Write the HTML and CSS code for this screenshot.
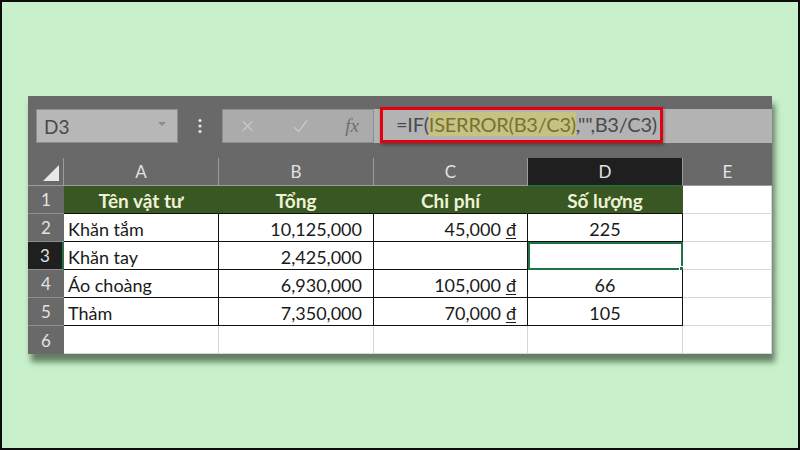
FILE: index.html
```html
<!DOCTYPE html>
<html>
<head>
<meta charset="utf-8">
<link rel="stylesheet" href="styles.css">
</head>
<body>
<div class="frame">
  <div class="sheet">
    <div class="toolbar">
      <div class="namebox">
        <span class="nb-text">D3</span>
        <svg class="caret" width="10" height="6" viewBox="0 0 10 6"><path d="M1 1 L9 1 L5 5 Z" fill="#8c8c8c"/></svg>
      </div>
      <div class="dots">
        <svg width="6" height="16" viewBox="0 0 6 16"><circle cx="3" cy="2.5" r="1.6" fill="#e6e6e6"/><circle cx="3" cy="8" r="1.6" fill="#e6e6e6"/><circle cx="3" cy="13.5" r="1.6" fill="#e6e6e6"/></svg>
      </div>
      <div class="fxbox">
        <svg class="ic-x" width="14" height="14" viewBox="0 0 14 14"><path d="M2 2 L12 12 M12 2 L2 12" stroke="#c6c6c6" stroke-width="1.6" fill="none"/></svg>
        <svg class="ic-ok" width="18" height="16" viewBox="0 0 18 16"><path d="M2 9 L7 14 L16 2" stroke="#c6c6c6" stroke-width="1.6" fill="none"/></svg>
        <span class="fx">fx</span>
      </div>
      <div class="formula">
        <div class="redbox">=IF(<span class="hl">ISERROR(B3/C3)</span>,"",B3/C3)</div>
      </div>
    </div>
    <div class="grid">
      <div class="corner"><svg width="16" height="16" viewBox="0 0 16 16"><path d="M16 0 L16 16 L0 16 Z" fill="#e8e8e8"/></svg></div>
      <div class="ch">A</div>
      <div class="ch">B</div>
      <div class="ch">C</div>
      <div class="ch sel">D</div>
      <div class="ch last">E</div>

      <div class="rh">1</div>
      <div class="c hd">Tên vật tư</div>
      <div class="c hd">Tổng</div>
      <div class="c hd">Chi phí</div>
      <div class="c hd">Số lượng</div>
      <div class="c"></div>

      <div class="rh">2</div>
      <div class="c b l">Khăn tắm</div>
      <div class="c b r">10,125,000</div>
      <div class="c b r">45,000 <u>đ</u></div>
      <div class="c b m">225</div>
      <div class="c"></div>

      <div class="rh sel">3</div>
      <div class="c b l">Khăn tay</div>
      <div class="c b r">2,425,000</div>
      <div class="c b r"></div>
      <div class="c b m active"><span class="handle"></span></div>
      <div class="c"></div>

      <div class="rh">4</div>
      <div class="c b l">Áo choàng</div>
      <div class="c b r">6,930,000</div>
      <div class="c b r">105,000 <u>đ</u></div>
      <div class="c b m">66</div>
      <div class="c"></div>

      <div class="rh">5</div>
      <div class="c b l">Thảm</div>
      <div class="c b r">7,350,000</div>
      <div class="c b r">70,000 <u>đ</u></div>
      <div class="c b m">105</div>
      <div class="c"></div>

      <div class="rh lastrow">6</div>
      <div class="c"></div>
      <div class="c"></div>
      <div class="c"></div>
      <div class="c"></div>
      <div class="c"></div>
    </div>
  </div>
</div>
</body>
</html>
```

FILE: styles.css
```css
* { box-sizing: border-box; }
html, body { margin: 0; padding: 0; }
body { width: 800px; height: 450px; overflow: hidden; font-family: Lato, "Open Sans", sans-serif; }

.frame {
  width: 800px;
  height: 450px;
  border: 2px solid #0d0d0d;
  background: #c8f0ca;
  padding: 94px 0 0 26px;
}

.sheet {
  width: 744px;
  background: #696969;
  box-shadow: 3px 8px 6px rgba(30, 50, 30, 0.6);
}

.toolbar {
  height: 62px;
  display: flex;
  align-items: flex-start;
  padding: 13px 0 0 8px;
}

.namebox {
  width: 142px;
  height: 34px;
  background: #b7b7b7;
  border: 1px solid #8d8d8d;
  display: flex;
  align-items: center;
  justify-content: space-between;
  padding: 0 10px 0 7px;
}
.nb-text { font-size: 19px; color: #4a4a4a; }
.caret { margin-bottom: 4px; }

.dots {
  width: 44px;
  height: 34px;
  display: flex;
  align-items: center;
  justify-content: center;
}

.fxbox {
  width: 152px;
  height: 34px;
  background: #ababab;
  border: 1px solid #8d8d8d;
  display: flex;
  align-items: center;
  padding: 0 14px 0 18px;
}
.ic-x { margin-right: 38px; }
.ic-ok { margin-right: 36px; }
.fx {
  font-family: "Liberation Serif", serif;
  font-style: italic;
  font-size: 19px;
  color: #6f6f6f;
}

.formula {
  flex: 1;
  height: 34px;
  background: #b3b3b3;
  padding-left: 6px;
}
.redbox {
  display: inline-block;
  height: 36px;
  margin-top: -2px;
  border: 3px solid #e3000f;
  box-shadow: 1px 2px 3px rgba(0,0,0,0.35);
  padding: 1px 8px 0 13px;
  width: 283px;
  font-size: 20px;
  letter-spacing: -0.25px;
  color: #4a4a4a;
  white-space: nowrap;
  line-height: 27px;
}
.hl { background: #c6c283; color: #77732f; }

.grid {
  display: grid;
  grid-template-columns: 36px 155px 155px 154px 155px 89px;
  grid-auto-rows: 28px;
  font-size: 18px;
  color: #1a1a1a;
}

.corner {
  display: flex;
  align-items: flex-end;
  justify-content: flex-end;
  padding: 0 4px 4px 0;
  border-right: 1px solid #9c9c9c;
  border-bottom: 1px solid #9c9c9c;
}

.ch {
  display: flex;
  align-items: center;
  justify-content: center;
  color: #e2e2e2;
  font-size: 17px;
  border-right: 1px solid #9c9c9c;
  border-bottom: 1px solid #9c9c9c;
}
.ch.last { border-right: none; }
.ch.sel { background: #1f1f1f; border-bottom: 1px solid #217346; }

.rh {
  display: flex;
  align-items: center;
  justify-content: center;
  color: #e2e2e2;
  font-size: 17px;
  border-bottom: 1px solid #8e8e8e;
}
.rh.sel { background: #1f1f1f; border-right: 2px solid #217346; }
.rh.lastrow { border-bottom: none; }

.c {
  background: #fff;
  border-right: 1px solid #d6d6d6;
  border-bottom: 1px solid #d6d6d6;
  display: flex;
  align-items: center;
  white-space: nowrap;
  position: relative;
  padding-top: 2px;
}
.c.hd {
  background: #385723;
  color: #eef2d4;
  font-weight: bold;
  font-size: 19px;
  justify-content: center;
  border-right-color: #385723;
  border-bottom: 1px solid #111;
}
.c.b { border-right-color: #111; border-bottom-color: #111; }
.c.l { padding-left: 4px; }
.c.r { justify-content: flex-end; padding-right: 11px; }
.c.m { justify-content: center; }
.c u { text-underline-offset: 2px; margin-left: 5px; }

.c.active {
  outline: 2px solid #217346;
  outline-offset: -2px;
}
.handle {
  position: absolute;
  right: -4px;
  bottom: -4px;
  width: 7px;
  height: 7px;
  background: #217346;
  border: 1px solid #fff;
}
```
